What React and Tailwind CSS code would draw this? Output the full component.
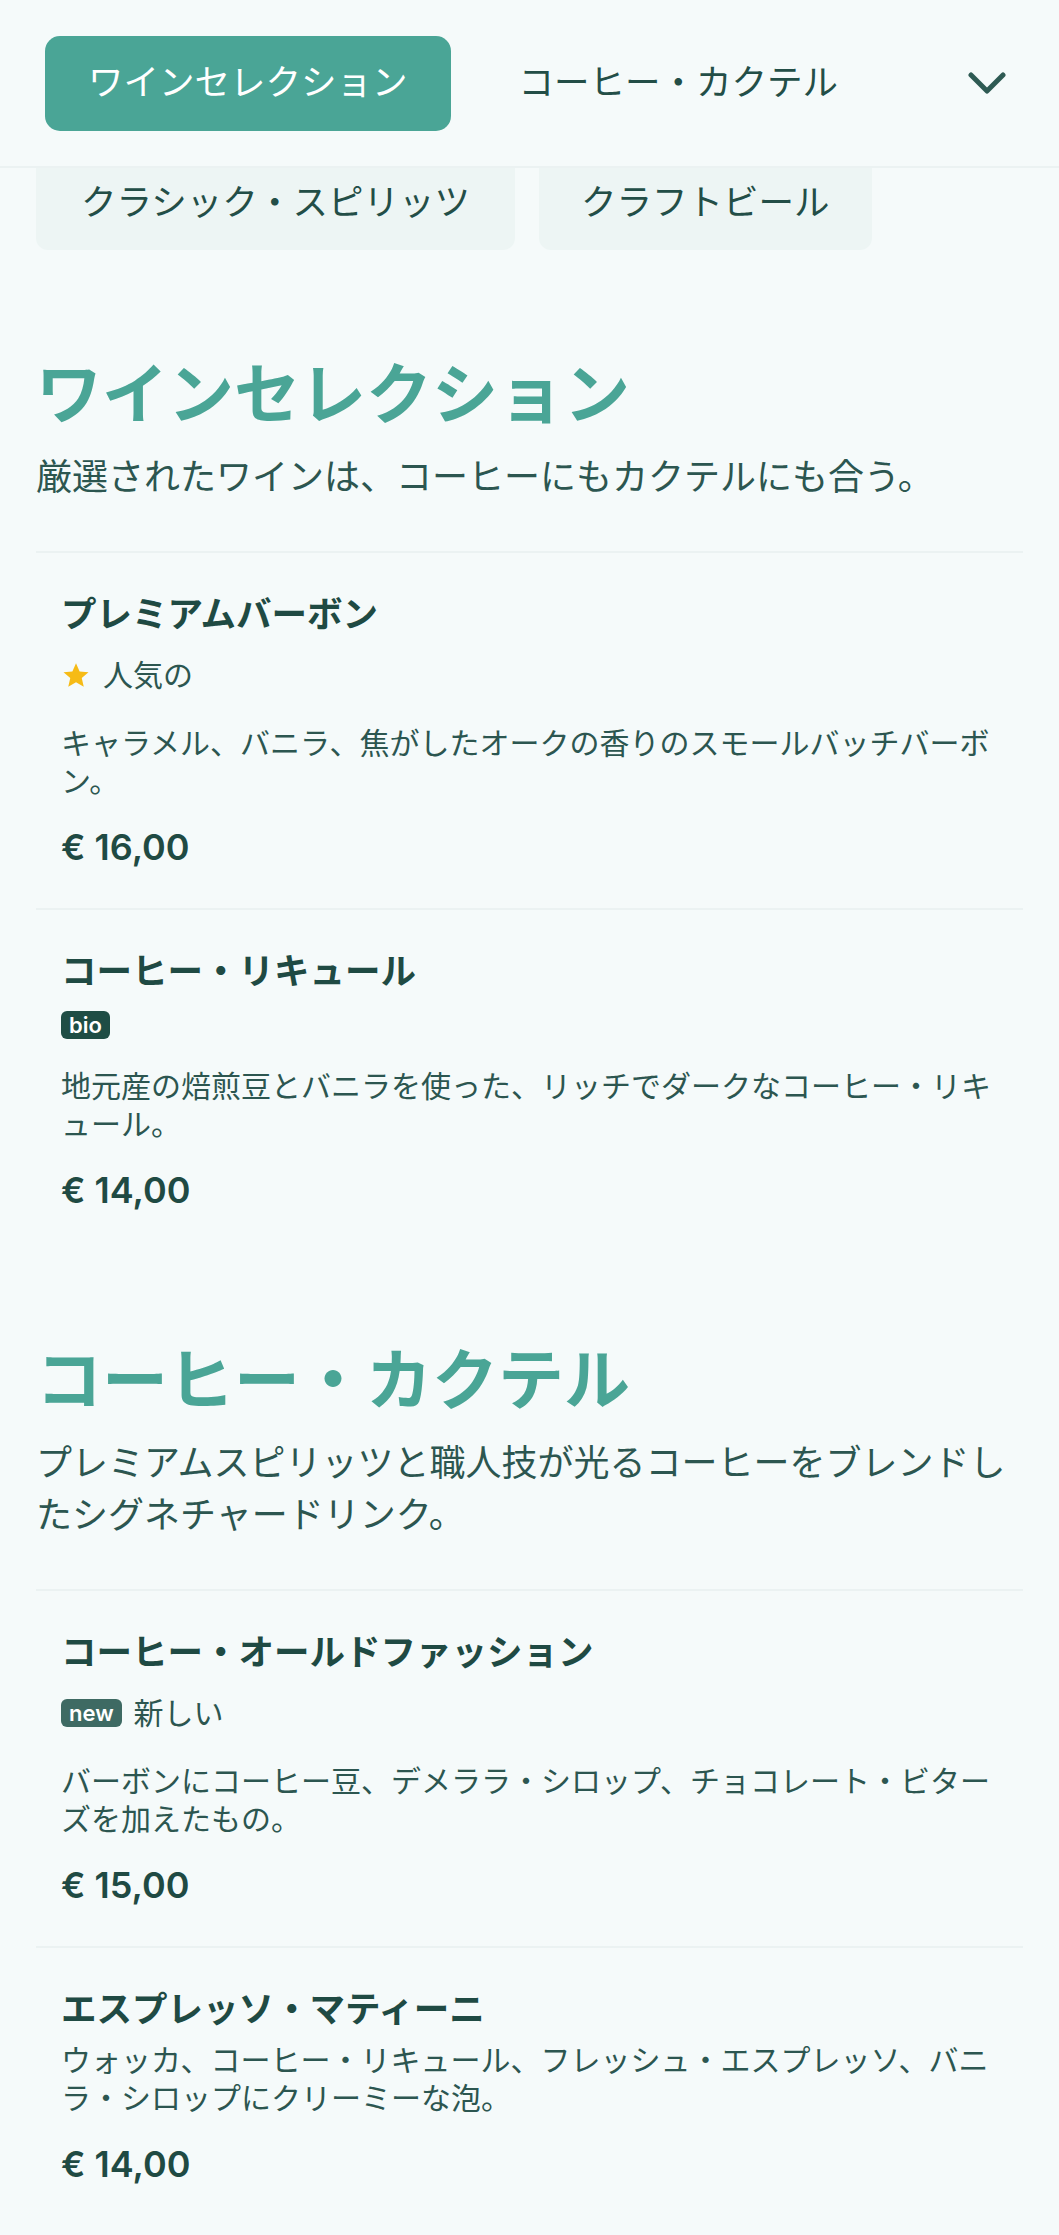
import React from 'react'

const sections = [
  {
    title: 'ワインセレクション',
    desc: '厳選されたワインは、コーヒーにもカクテルにも合う。',
    items: [
      {
        name: 'プレミアムバーボン',
        star: '人気の',
        desc: 'キャラメル、バニラ、焦がしたオークの香りのスモールバッチバーボン。',
        price: '€ 16,00',
      },
      {
        name: 'コーヒー・リキュール',
        badge: 'bio',
        desc: '地元産の焙煎豆とバニラを使った、リッチでダークなコーヒー・リキュール。',
        price: '€ 14,00',
      },
    ],
  },
  {
    title: 'コーヒー・カクテル',
    desc: 'プレミアムスピリッツと職人技が光るコーヒーをブレンドしたシグネチャードリンク。',
    items: [
      {
        name: 'コーヒー・オールドファッション',
        badge: 'new',
        label: '新しい',
        desc: 'バーボンにコーヒー豆、デメララ・シロップ、チョコレート・ビターズを加えたもの。',
        price: '€ 15,00',
      },
      {
        name: 'エスプレッソ・マティーニ',
        desc: 'ウォッカ、コーヒー・リキュール、フレッシュ・エスプレッソ、バニラ・シロップにクリーミーな泡。',
        price: '€ 14,00',
      },
    ],
  },
]

const StarIcon = () => (
  <svg width="30" height="30" viewBox="0 0 24 24" className="shrink-0">
    <path
      d="M12 2.5l2.9 6.6 7.1.6-5.4 4.7 1.6 7-6.2-3.7-6.2 3.7 1.6-7L2 9.7l7.1-.6z"
      fill="#f6bb16"
    />
  </svg>
)

const MenuItem = ({ item }) => {
  const hasTags = item.star || item.badge
  return (
    <div className="border-t-2 border-[#ebf2f2] px-[25px] pt-[37px] pb-[35px]">
      <h3 className="text-[35.5px] font-bold leading-[50px] text-[#1f4a43]">{item.name}</h3>

      {hasTags && (
        <div className="mt-[14px] mb-[28px] flex items-center gap-[12px]">
          {item.star && (
            <>
              <StarIcon />
              <span className="text-[30px] leading-[42px] text-[#2c5650]">{item.star}</span>
            </>
          )}
          {item.badge && (
            <span
              className={`h-[28px] rounded-[6px] px-[8px] flex items-center text-[22px] font-semibold leading-none text-white ${
                item.badge === 'bio' ? 'bg-[#1f4d45]' : 'bg-[#3e6a63]'
              }`}
            >
              {item.badge}
            </span>
          )}
          {item.label && (
            <span className="text-[30px] leading-[42px] text-[#2c5650]">{item.label}</span>
          )}
        </div>
      )}

      <p className="mt-[6px] text-[30px] leading-[38px] text-[#2c5650]">{item.desc}</p>
      <p className="mt-[21px] text-[36px] font-semibold leading-[52px] text-[#1f4a43]">{item.price}</p>
    </div>
  )
}

export default function App() {
  return (
    <div className="min-h-screen w-full bg-[#f5fafa] font-[Inter,'Noto_Sans_CJK_JP',sans-serif] text-[#234e47]">
      {/* Tabs */}
      <div className="h-[168px] flex items-center pl-[45px] pr-[53px] border-b-2 border-[#ebf2f2]">
        <div className="h-[95px] px-[43px] rounded-[15px] bg-[#4aa596] flex items-center text-[35.5px] text-white whitespace-nowrap">
          ワインセレクション
        </div>
        <div className="ml-[25px] h-[95px] px-[43px] flex items-center text-[35.5px] whitespace-nowrap">
          コーヒー・カクテル
        </div>
        <svg width="38" height="22" viewBox="0 0 38 22" className="ml-auto" fill="none">
          <polyline
            points="3,3 19,19 35,3"
            stroke="#2e5a53"
            strokeWidth="5"
            strokeLinecap="round"
            strokeLinejoin="round"
          />
        </svg>
      </div>

      <div className="flex gap-[24px] px-[36px]">
        <div className="h-[82px] px-[45px] pb-[12px] rounded-b-[12px] bg-[#edf5f4] flex items-center text-[35.5px] whitespace-nowrap">
          クラシック・スピリッツ
        </div>
        <div className="h-[82px] px-[42px] pb-[12px] rounded-b-[12px] bg-[#edf5f4] flex items-center text-[35.5px] whitespace-nowrap">
          クラフトビール
        </div>
      </div>

      {/* Sections */}
      <div className="flex flex-col gap-[89px] px-[36px] pt-[104px] pb-[14px]">
        {sections.map((s) => (
          <section key={s.title}>
            <h2 className="text-[66px] font-bold leading-[80px] text-[#4aa596]">{s.title}</h2>
            <p className="mt-[17px] text-[36px] leading-[52px] text-[#2c5650]">{s.desc}</p>
            <div className="mt-[48px]">
              {s.items.map((item) => (
                <MenuItem key={item.name} item={item} />
              ))}
            </div>
          </section>
        ))}
      </div>
    </div>
  )
}
